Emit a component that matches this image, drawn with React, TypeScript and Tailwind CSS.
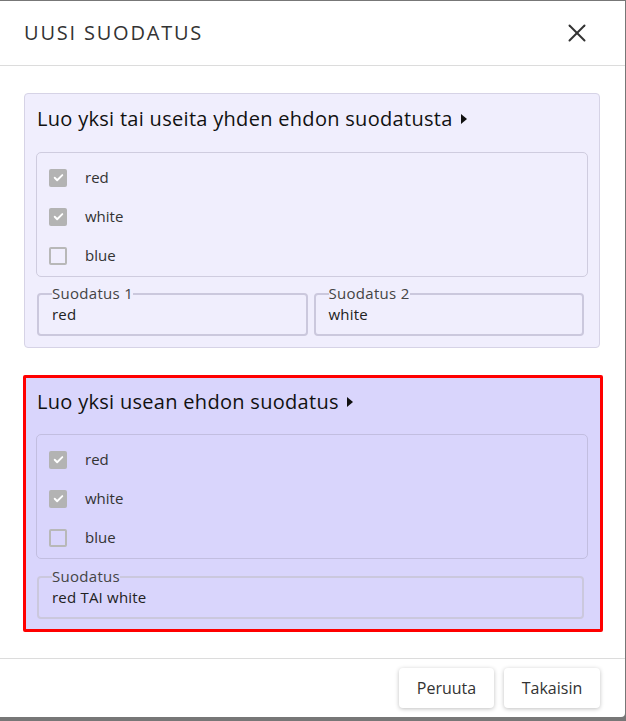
import React from 'react';
import { X } from 'lucide-react';

const font = { fontFamily: '"Open Sans", "Liberation Sans", sans-serif' };

const Check: React.FC<{ checked: boolean; label: string }> = ({ checked, label }) => (
  <div className="flex items-center h-[39px] pl-[12px]">
    {checked ? (
      <span className="w-[18px] h-[18px] rounded-[2px] bg-[#b3b3b3] flex items-center justify-center">
        <svg width="13" height="13" viewBox="0 0 24 24" fill="none" stroke="white" strokeWidth="3.5" strokeLinecap="round" strokeLinejoin="round">
          <path d="M5 12.5l4.5 4.5L19 7.5" />
        </svg>
      </span>
    ) : (
      <span className="w-[18px] h-[18px] rounded-[2px] border-2 border-[#b8b8b8]" />
    )}
    <span className="ml-[18px] text-[15px] text-[#333]">{label}</span>
  </div>
);

const Field: React.FC<{ legend: string; value: string; bg: string }> = ({ legend, value, bg }) => (
  <div className="relative flex-1 h-[43px] border-2 border-[#cbc8dd] rounded-[4px] pl-[13px] pt-[10px] min-w-0">
    <span className={`absolute -top-[11px] left-[13px] text-[15px] tracking-[0.3px] leading-[18px] text-[#444] ${bg}`}>{legend}</span>
    <div className="text-[15px] tracking-[0.2px] text-[#222] leading-[18px]">{value}</div>
  </div>
);

const Panel: React.FC<{ title: string; active?: boolean; fields: { legend: string; value: string }[] }> = ({ title, active, fields }) => (
  <div
    className={
      active
        ? 'bg-[#d9d5fc] border-[3px] border-[#ff0000] rounded-[2px] pl-[10px] pr-[12px] pb-[10px]'
        : 'bg-[#f0eefd] border border-[#d6d3e6] rounded-[4px] pl-[11px] pr-[11px] pb-[11px] ml-[1px] mr-[3px]'
    }
  >
    <div className={active ? 'flex items-center h-[48px] pl-[1px]' : 'flex items-center h-[50px] pl-[1px]'}>
      <span className="text-[20px] tracking-[0.3px] text-[#111]">{title}</span>
      <svg className="ml-[8px]" width="6" height="10" viewBox="0 0 6 10">
        <path d="M0 0 L6 5 L0 10 Z" fill="#111" />
      </svg>
    </div>
    <div className={active ? 'mt-[8px] border border-[#c2bee0] rounded-[5px] pt-[5px] pb-[1px]' : 'mt-[8px] border border-[#cfccdf] rounded-[5px] pt-[5px] pb-[1px]'}>
      <Check checked label="red" />
      <Check checked label="white" />
      <Check checked={false} label="blue" />
    </div>
    <div className={active ? 'flex gap-[6px] mt-[17px] pl-[1px] pr-[4px]' : 'flex gap-[6px] mt-[16px] pl-[1px] pr-[4px]'}>
      {fields.map((f) => (
        <Field key={f.legend} legend={f.legend} value={f.value} bg={active ? 'bg-[#d9d5fc]' : 'bg-[#f0eefd]'} />
      ))}
    </div>
  </div>
);

export default function App() {
  return (
    <div className="w-[626px] h-[721px] bg-[#777] pt-[1px] overflow-hidden" style={font}>
      <div className="w-[625px] h-[716px] bg-white rounded-br-[4px] flex flex-col">
        <div className="flex items-center justify-between h-[65px] pl-[24px] pr-[33px] border-b border-[#dcdcdc]">
          <span className="text-[20px] tracking-[1.8px] text-[#333]">UUSI SUODATUS</span>
          <X className="w-[30px] h-[30px] text-[#333]" strokeWidth={1.6} />
        </div>
        <div className="flex flex-col gap-[27px] pt-[27px] pl-[23px] pr-[22px]">
          <Panel
            title="Luo yksi tai useita yhden ehdon suodatusta"
            fields={[
              { legend: 'Suodatus 1', value: 'red' },
              { legend: 'Suodatus 2', value: 'white' },
            ]}
          />
          <Panel active title="Luo yksi usean ehdon suodatus" fields={[{ legend: 'Suodatus', value: 'red TAI white' }]} />
        </div>
        <div className="mt-auto border-t border-[#dcdcdc] h-[59px] flex items-start justify-end gap-[10px] pt-[9px] pr-[25px]">
          <button className="w-[95px] h-[40px] bg-white rounded-[4px] shadow-[0_1px_4px_rgba(0,0,0,0.25)] text-[16px] text-[#333]">Peruuta</button>
          <button className="w-[96px] h-[40px] bg-white rounded-[4px] shadow-[0_1px_4px_rgba(0,0,0,0.25)] text-[16px] text-[#333]">Takaisin</button>
        </div>
      </div>
    </div>
  );
}
